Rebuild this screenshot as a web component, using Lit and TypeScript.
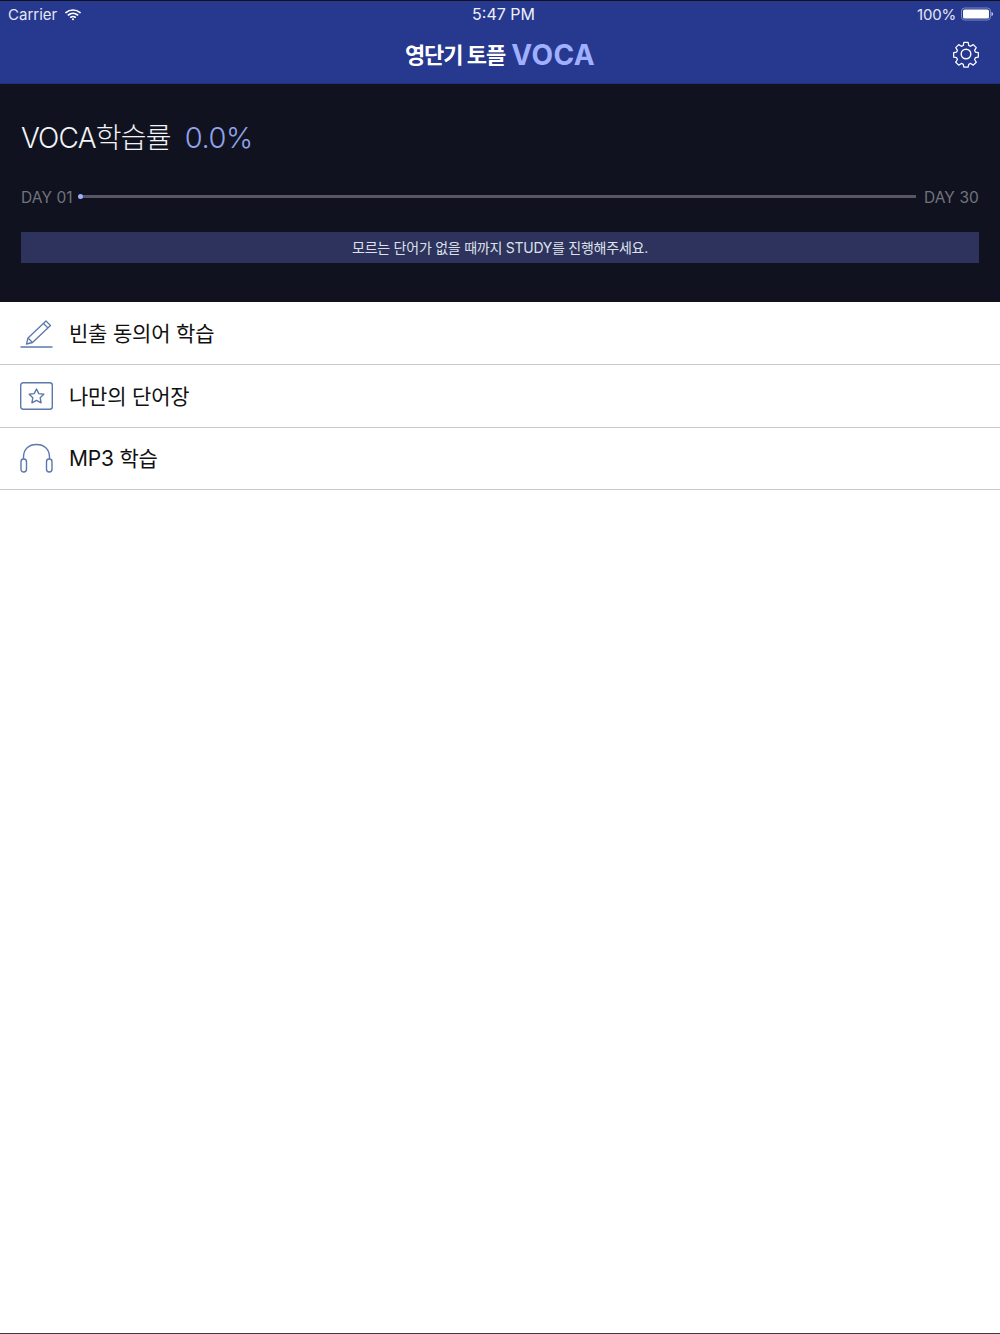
import { LitElement, html, css } from "lit";
import { customElement } from "lit/decorators.js";

const FONT = css`Inter, "Noto Sans CJK KR", "Liberation Sans", sans-serif`;

@customElement("app-root")
export class AppRoot extends LitElement {
  static styles = css`
    :host { display: flex; flex-direction: column; width: 1000px; height: 1334px; background: #fff; font-family: ${FONT}; overflow: hidden; }
    .top { height: 84px; flex: none; box-sizing: border-box; background: #27388f; border-top: 1px solid #10131f; border-bottom: 1px solid #222f80; display: flex; flex-direction: column; }
    .status { height: 26px; flex: none; display: grid; grid-template-columns: 1fr auto 1fr; align-items: center; padding: 0 7px 0 8px; color: #e4e7f4; font-size: 15px; }
    .st-left { display: flex; align-items: center; gap: 8px; }
    .st-mid { color: #eef0f8; padding-left: 6px; font-size: 16px; }
    .st-right { display: flex; align-items: center; justify-content: flex-end; gap: 5px; letter-spacing: -0.2px; }
    .nav { flex: 1; display: flex; align-items: center; position: relative; justify-content: center; }
    .brand { display: flex; align-items: center; gap: 6px; padding-bottom: 1px; }
    .brand .kr { color: #fff; font-size: 22px; font-weight: 700; letter-spacing: -1px; padding-bottom: 4px; }
    .brand .en { color: #9fb0ff; font-size: 28px; font-weight: 700; letter-spacing: 0.4px; line-height: 32px; }
    .gear { position: absolute; right: 20px; top: 13px; }
    .dash { height: 218px; flex: none; box-sizing: border-box; background: #10131f; padding: 32px 21px 0; display: flex; flex-direction: column; }
    .rate { display: flex; align-items: center; gap: 14px; font-size: 28px; font-weight: 300; height: 40px; letter-spacing: -0.8px; }
    .rate .l { color: #f2f3f6; }
    .rate .v { color: #8fa2ea; font-size: 29px; letter-spacing: -0.4px; padding-top: 2px; }
    .prog { display: flex; align-items: center; margin-top: 31px; height: 20px; color: #72737e; font-size: 15.5px; letter-spacing: 0.1px; }
    .track { flex: 1; height: 3px; background: #565665; margin: 0 8px 2px 6px; position: relative; }
    .dot { position: absolute; left: -1px; top: -1px; width: 5px; height: 5px; border-radius: 50%; background: #9fb0ff; }
    .msg { margin-top: 25px; height: 31px; background: #2d335c; color: #dfe1ea; font-size: 14px; display: flex; align-items: center; justify-content: center; letter-spacing: -0.25px; padding-bottom: 2px; box-sizing: border-box; }
    .row { height: 62.8px; flex: none; box-sizing: border-box; border-bottom: 1px solid #c9c9c9; display: flex; align-items: center; padding-left: 20px; gap: 16px; font-size: 21px; color: #111; font-weight: 400; letter-spacing: -0.2px; }
    .row span { padding-bottom: 2px; }
    .row svg { flex: none; }
    .spacer { flex: 1; }
    .foot { height: 1px; flex: none; background: #3c3c3c; }
  `;

  render() {
    return html`
      <div class="top">
        <div class="status">
          <div class="st-left">
            <span>Carrier</span>
            <svg width="16" height="13" viewBox="0 0 17 13" fill="none" stroke="#fff" stroke-width="1.8" stroke-linecap="round">
              <path d="M1 4.400C5.200 .8 11.800 .8 16 4.400" />
              <path d="M3.600 7C6.400 4.800 10.600 4.800 13.400 7" />
              <path d="M6.100 9.400C7.500 8.500 9.500 8.500 10.900 9.400" />
              <circle cx="8.500" cy="11.600" r="1.100" fill="#fff" stroke="none" />
            </svg>
          </div>
          <div class="st-mid">5:47 PM</div>
          <div class="st-right">
            <span>100%</span>
            <svg width="32" height="14" viewBox="0 0 32 14">
              <rect x=".5" y="1" width="29" height="12" rx="3" fill="none" stroke="#7d8ac4" />
              <rect x="2" y="2.500" width="26" height="9" rx="1.600" fill="#fff" />
              <path d="M30.500 5c1 .2 1.500 1 1.500 2s-.5 1.800-1.500 2z" fill="#c9cfe8" />
            </svg>
          </div>
        </div>
        <div class="nav">
          <div class="brand"><span class="kr">영단기 토플</span><span class="en">VOCA</span></div>
          <svg class="gear" width="28" height="28" viewBox="0 0 28 28" fill="none" stroke="#fff" stroke-width="1.4" stroke-linejoin="round">
            <path d="M11.600 1.300h4.800l.7 3.400 2 .9 3-1.900 3.300 3.300-1.900 3 .9 2 3.300.7v4.800l-3.300.7-.9 2 1.900 3-3.300 3.300-3-1.900-2 .9-.7 3.100h-4.800l-.7-3.100-2-.9-3 1.900-3.300-3.300 1.900-3-.9-2-3.300-.7v-4.800l3.300-.7.9-2-1.900-3 3.300-3.300 3 1.900 2-.9z" transform="translate(1.400 1.300) scale(.9)" />
            <circle cx="14" cy="14" r="4.800" />
          </svg>
        </div>
      </div>
      <div class="dash">
        <div class="rate"><span class="l">VOCA학습률</span><span class="v">0.0%</span></div>
        <div class="prog">
          <span>DAY 01</span>
          <div class="track"><div class="dot"></div></div>
          <span>DAY 30</span>
        </div>
        <div class="msg">모르는 단어가 없을 때까지 STUDY를 진행해주세요.</div>
      </div>
      <div class="row">
        <svg width="33" height="30" viewBox="0 0 33 30" fill="none" stroke="#5a78ac" stroke-width="1.3" stroke-linejoin="round">
          <path d="M6.500 26 8 20 26 3 30.500 7.500 12.500 24.500z" />
          <path d="M23.500 5.500 28 10M8 20 12.500 24.500" />
          <path d="M.5 29h32" stroke-width="1.500" />
        </svg>
        <span>빈출 동의어 학습</span>
      </div>
      <div class="row">
        <svg width="33" height="28" viewBox="0 0 33 28" fill="none" stroke="#5a78ac" stroke-width="1.400" stroke-linejoin="round">
          <rect x=".7" y=".7" width="31.600" height="26.600" rx="2.500" />
          <path d="M16.500 7l2.300 4.600 5 .7-3.600 3.500.9 5-4.600-2.400-4.600 2.400.9-5-3.600-3.500 5-.7z" />
        </svg>
        <span>나만의 단어장</span>
      </div>
      <div class="row">
        <svg width="33" height="30" viewBox="0 0 33 30" fill="none" stroke="#5a78ac" stroke-width="1.400">
          <path d="M3.500 16V14C3.500 6 9 1.500 16.500 1.500S29.500 6 29.500 14V16" />
          <rect x="1" y="16" width="5.500" height="13" rx="2.700" />
          <rect x="26.500" y="16" width="5.500" height="13" rx="2.700" />
        </svg>
        <span>MP3 학습</span>
      </div>
      <div class="spacer"></div>
      <div class="foot"></div>
    `;
  }
}
